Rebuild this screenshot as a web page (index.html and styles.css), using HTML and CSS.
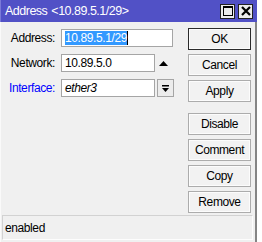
FILE: index.html
```html
<!DOCTYPE html>
<html lang="en">
<head>
<meta charset="UTF-8">
<meta name="viewport" content="width=device-width, initial-scale=1.0">
<title>Address</title>
<link rel="stylesheet" href="styles.css">
</head>
<body>
<div class="window">
  <div class="titlebar">
    <span class="title">Address &lt;10.89.5.1/29&gt;</span>
    <div class="title-buttons">
      <span class="tbtn">
        <svg width="12" height="12" viewBox="0 0 12 12"><rect x="1.5" y="1.5" width="9" height="9" fill="none" stroke="#000" stroke-width="1"/><rect x="1" y="1" width="10" height="2" fill="#000"/></svg>
      </span>
      <span class="tbtn">
        <svg width="12" height="12" viewBox="0 0 12 12"><path d="M2 2 L10 10 M10 2 L2 10" stroke="#000" stroke-width="2.2"/></svg>
      </span>
    </div>
  </div>

  <div class="body">
    <div class="content">
      <!-- Fields -->
      <div class="form">
        <div class="row">
          <span class="label">Address:</span>
          <div class="field field-address"><span class="selected">10.89.5.1/29</span></div>
        </div>
        <div class="row">
          <span class="label">Network:</span>
          <div class="field field-short">10.89.5.0</div>
          <svg class="arrow-up" width="9" height="5" viewBox="0 0 9 5"><path d="M0 5 L4.5 0 L9 5 Z" fill="#000"/></svg>
        </div>
        <div class="row">
          <span class="label label-link">Interface:</span>
          <div class="field field-short field-italic">ether3</div>
          <span class="dropdown">
            <svg width="9" height="9" viewBox="0 0 9 9"><rect x="1" y="1" width="7" height="1.5" fill="#000"/><path d="M1 4 L8 4 L4.5 8 Z" fill="#000"/></svg>
          </span>
        </div>
      </div>

      <!-- Buttons -->
      <div class="actions">
        <button class="btn btn-default">OK</button>
        <button class="btn">Cancel</button>
        <button class="btn">Apply</button>
        <button class="btn btn-gap">Disable</button>
        <button class="btn">Comment</button>
        <button class="btn">Copy</button>
        <button class="btn">Remove</button>
      </div>
    </div>

    <div class="status">enabled</div>
  </div>
</div>
</body>
</html>
```

FILE: styles.css
```css
body {
  margin: 0;
  padding: 0;
  background: #fff;
  font-family: "Liberation Sans", Arial, sans-serif;
  font-size: 12px;
  letter-spacing: -0.4px;
  color: #000;
}
.window {
  width: 257px;
  height: 242px;
  display: flex;
  flex-direction: column;
}
.titlebar {
  height: 22px;
  background: #5151c6;
  border-left: 1px solid #7a7ad8;
  display: flex;
  align-items: center;
  justify-content: space-between;
  padding: 0 4px 0 4px;
  color: #fff;
  font-size: 12.5px;
  letter-spacing: -0.5px;
  word-spacing: 1px;
}
.title-buttons {
  display: flex;
  gap: 3px;
}
.tbtn {
  width: 13px;
  height: 13px;
  background: #ececec;
  border: 1px solid #222;
  display: flex;
  align-items: center;
  justify-content: center;
}
.body {
  flex: 1;
  background: #f0f0f0;
  border-left: 1px solid #fafafa;
  border-right: 2px solid #858585;
  padding: 0 2px 0 1px;
  display: flex;
  flex-direction: column;
}
.content {
  flex: 1;
  display: flex;
}
.form {
  width: 185px;
  padding-top: 7px;
  display: flex;
  flex-direction: column;
  gap: 7px;
}
.row {
  display: flex;
  align-items: center;
  height: 18px;
}
.label {
  width: 53px;
  text-align: right;
  margin-right: 6px;
}
.label-link {
  color: #0000ff;
}
.field {
  height: 16px;
  line-height: 16px;
  background: #fff;
  border: 1px solid #a5a5a5;
  padding-left: 3px;
  box-sizing: content-box;
}
.field-address {
  width: 107px;
}
.field-short {
  width: 89px;
}
.field-italic {
  font-style: italic;
}
.selected {
  background: #3399ff;
  color: #fff;
  border-right: 1px solid #000;
  display: inline-block;
  line-height: 14px;
}
.arrow-up {
  margin-left: 4px;
}
.dropdown {
  width: 15px;
  height: 16px;
  margin-left: 2px;
  background: #ececec;
  border: 1px solid #a5a5a5;
  display: flex;
  align-items: center;
  justify-content: center;
}
.actions {
  padding-top: 6px;
  margin-left: 1px;
  display: flex;
  flex-direction: column;
  gap: 4px;
}
.btn {
  width: 63px;
  height: 22px;
  font-family: inherit;
  font-size: 12px;
  letter-spacing: -0.4px;
  color: #000;
  background: #f2f2f2;
  border: 1px solid #acacac;
  box-shadow: inset 0 0 0 1px #fcfcfc;
  padding: 0;
}
.btn-default {
  border-color: #2b2b2b;
}
.btn-gap {
  margin-top: 7px;
}
.status {
  height: 23px;
  line-height: 24px;
  margin-bottom: 2px;
  padding-left: 2px;
  border: 1px solid #d2d2d2;
  border-bottom-color: #fdfdfd;
  border-right-color: #fdfdfd;
}
```
